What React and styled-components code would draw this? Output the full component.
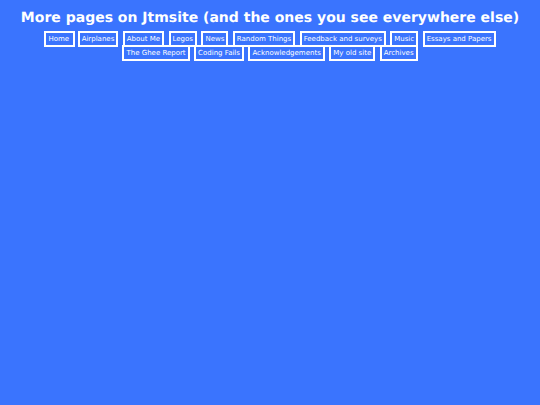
import React from "react";
import styled, { createGlobalStyle } from "styled-components";

const GlobalStyle = createGlobalStyle`
  body {
    margin: 0;
    background: #3a74fe;
    color: #fff;
    font-family: Verdana, "DejaVu Sans", sans-serif;
    text-rendering: geometricPrecision;
  }
`;

const Page = styled.main`
  padding: 8px;
  text-align: center;
`;

const Title = styled.h1`
  margin: 0 0 4px;
  font-size: 14px;
  line-height: 20px;
`;

const PageList = styled.ul`
  margin: 0;
  padding: 0 24px;
  list-style: none;
  font-size: 7px;
  line-height: 14px;
`;

const PageItem = styled.li`
  display: inline;
`;

const PageLink = styled.a`
  padding: 2px;
  border: 2px solid #fff;
  color: inherit;
  text-decoration: none;
  white-space: nowrap;
`;

const pages = [
  { url: "/", title: "Home\u00a0" },
  { url: "/airplanes", title: "Airplanes", spaced: true },
  { url: "/about", title: "About Me", spaced: true },
  { url: "/legos", title: "Legos", spaced: true },
  { url: "/news", title: "News", spaced: true },
  { url: "/random", title: "Random Things", spaced: true },
  { url: "/feedback", title: "Feedback and surveys", spaced: true },
  { url: "/music", title: "Music", spaced: true },
  { url: "/essays", title: "Essays and Papers" },
  { url: "/ghee-report", title: "The Ghee Report", spaced: true },
  { url: "/coding-fails", title: "Coding Fails", spaced: true },
  { url: "/acknowledgements", title: "Acknowledgements", spaced: true },
  { url: "/old-site", title: "My old site", spaced: true },
  { url: "/archives", title: "Archives" },
];

const App = () => {
  return (
    <Page>
      <GlobalStyle />
      <Title>More pages on Jtmsite (and the ones you see everywhere else)</Title>
      <nav>
        <PageList>
          {pages.map((item) => (
            <PageItem key={item.url}>
              <PageLink href={item.url}>{item.title}</PageLink>
              {item.spaced ? "\u00a0 " : " "}
            </PageItem>
          ))}
        </PageList>
      </nav>
    </Page>
  );
};

export default App;
